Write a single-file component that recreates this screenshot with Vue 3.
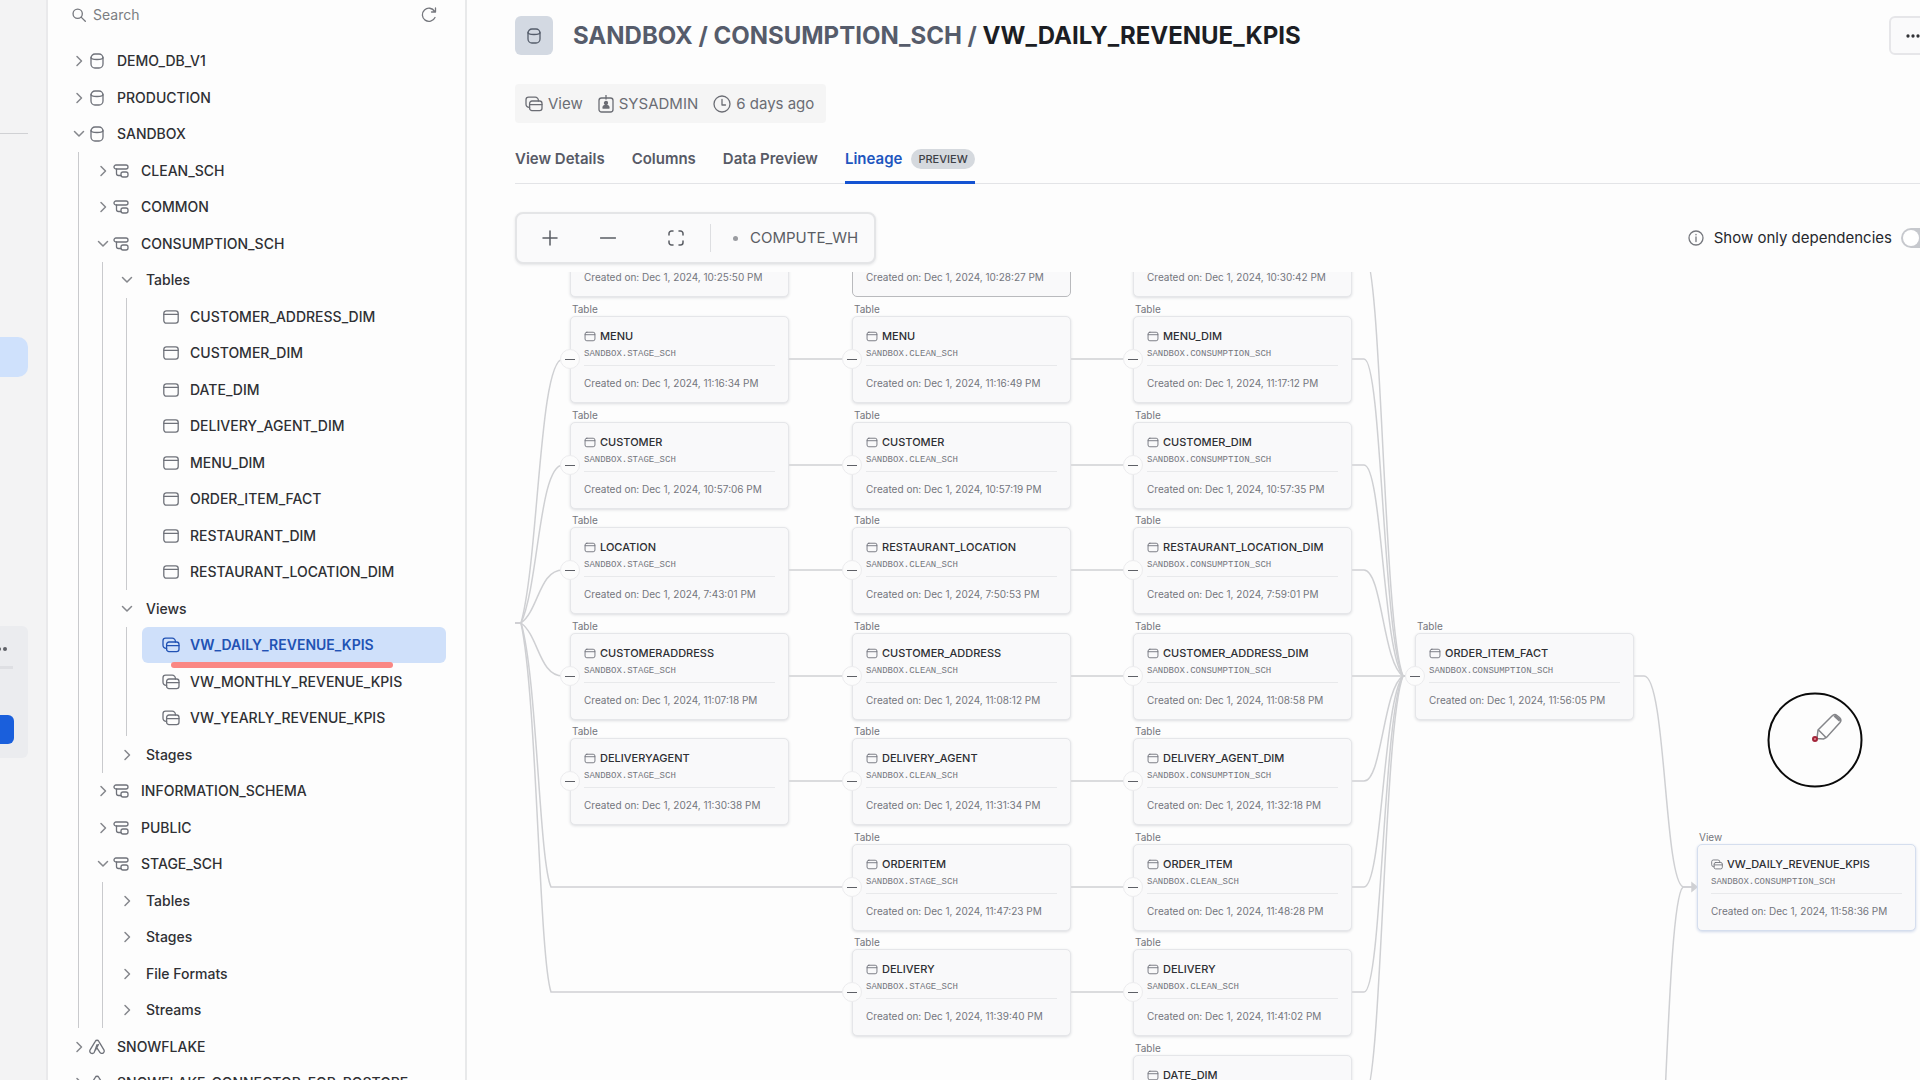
<script setup>
import { ref } from 'vue'

const search = ref('')
const onlyDependencies = ref(false)

const row = (depth, label, icon, open, extra = {}) => ({ depth, label, icon, open, ...extra })
const leaf = (label, icon, extra = {}) => ({ depth: 3, label, icon, leaf: true, ...extra })

const tree = [
  row(0, 'DEMO_DB_V1', 'db', false),
  row(0, 'PRODUCTION', 'db', false),
  row(0, 'SANDBOX', 'db', true),
  row(1, 'CLEAN_SCH', 'schema', false),
  row(1, 'COMMON', 'schema', false),
  row(1, 'CONSUMPTION_SCH', 'schema', true),
  row(2, 'Tables', null, true),
  leaf('CUSTOMER_ADDRESS_DIM', 'table'),
  leaf('CUSTOMER_DIM', 'table'),
  leaf('DATE_DIM', 'table'),
  leaf('DELIVERY_AGENT_DIM', 'table'),
  leaf('MENU_DIM', 'table'),
  leaf('ORDER_ITEM_FACT', 'table'),
  leaf('RESTAURANT_DIM', 'table'),
  leaf('RESTAURANT_LOCATION_DIM', 'table'),
  row(2, 'Views', null, true),
  leaf('VW_DAILY_REVENUE_KPIS', 'view', { selected: true }),
  leaf('VW_MONTHLY_REVENUE_KPIS', 'view'),
  leaf('VW_YEARLY_REVENUE_KPIS', 'view'),
  row(2, 'Stages', null, false),
  row(1, 'INFORMATION_SCHEMA', 'schema', false),
  row(1, 'PUBLIC', 'schema', false),
  row(1, 'STAGE_SCH', 'schema', true),
  row(2, 'Tables', null, false),
  row(2, 'Stages', null, false),
  row(2, 'File Formats', null, false),
  row(2, 'Streams', null, false),
  row(0, 'SNOWFLAKE', 'app', false),
  row(0, 'SNOWFLAKE_CONNECTOR_FOR_POSTGRE', 'app', false),
]

// Lineage graph: columns and rows of the layout grid
const CARD_W = 219
const colX = [55, 337, 618, 900, 1182]
const rowY = (r) => Math.round(86.9 + 105.6 * r)

const node = (col, r, name, schema, time, extra = {}) => ({
  col, r, name,
  schema: schema && 'SANDBOX.' + schema,
  created: time && 'Created on: Dec 1, 2024, ' + time,
  kind: 'Table', icon: 'table', handle: true,
  x: colX[col], y: rowY(r), ...extra,
})
// Cards scrolled past the top edge keep only their last line
const tail = (col, time, extra = {}) => node(col, -1, '', '', time, { kind: '', handle: false, ...extra })

const nodes = [
  tail(0, '10:25:50 PM'),
  node(0, 0, 'MENU', 'STAGE_SCH', '11:16:34 PM'),
  node(0, 1, 'CUSTOMER', 'STAGE_SCH', '10:57:06 PM'),
  node(0, 2, 'LOCATION', 'STAGE_SCH', '7:43:01 PM'),
  node(0, 3, 'CUSTOMERADDRESS', 'STAGE_SCH', '11:07:18 PM'),
  node(0, 4, 'DELIVERYAGENT', 'STAGE_SCH', '11:30:38 PM'),
  tail(1, '10:28:27 PM', { hover: true }),
  node(1, 0, 'MENU', 'CLEAN_SCH', '11:16:49 PM'),
  node(1, 1, 'CUSTOMER', 'CLEAN_SCH', '10:57:19 PM'),
  node(1, 2, 'RESTAURANT_LOCATION', 'CLEAN_SCH', '7:50:53 PM'),
  node(1, 3, 'CUSTOMER_ADDRESS', 'CLEAN_SCH', '11:08:12 PM'),
  node(1, 4, 'DELIVERY_AGENT', 'CLEAN_SCH', '11:31:34 PM'),
  node(1, 5, 'ORDERITEM', 'STAGE_SCH', '11:47:23 PM'),
  node(1, 6, 'DELIVERY', 'STAGE_SCH', '11:39:40 PM'),
  tail(2, '10:30:42 PM'),
  node(2, 0, 'MENU_DIM', 'CONSUMPTION_SCH', '11:17:12 PM'),
  node(2, 1, 'CUSTOMER_DIM', 'CONSUMPTION_SCH', '10:57:35 PM'),
  node(2, 2, 'RESTAURANT_LOCATION_DIM', 'CONSUMPTION_SCH', '7:59:01 PM'),
  node(2, 3, 'CUSTOMER_ADDRESS_DIM', 'CONSUMPTION_SCH', '11:08:58 PM'),
  node(2, 4, 'DELIVERY_AGENT_DIM', 'CONSUMPTION_SCH', '11:32:18 PM'),
  node(2, 5, 'ORDER_ITEM', 'CLEAN_SCH', '11:48:28 PM'),
  node(2, 6, 'DELIVERY', 'CLEAN_SCH', '11:41:02 PM'),
  node(2, 7, 'DATE_DIM', '', '', { handle: false }),
  node(3, 3, 'ORDER_ITEM_FACT', 'CONSUMPTION_SCH', '11:56:05 PM'),
  node(4, 5, 'VW_DAILY_REVENUE_KPIS', 'CONSUMPTION_SCH', '11:58:36 PM', {
    kind: 'View', icon: 'view', handle: false, current: true,
  }),
]

const edges = []
const fanY = 351
for (const r of [0, 1, 2, 3]) {
  const y = rowY(r)
  const d = y - fanY
  edges.push(`M0 ${fanY}H6C${24} ${fanY + d * 0.25} 24 ${y} 48 ${y}`)
}
for (const r of [5, 6]) {
  const y = rowY(r)
  const d = y - fanY
  edges.push(`M0 ${fanY}H6C22 ${fanY + d * 0.2} 24 ${y - d * 0.1} 36 ${y}H${colX[1] - 9}`)
}
for (let r = 0; r <= 6; r++) {
  if (r <= 4) edges.push(`M${colX[0] + CARD_W} ${rowY(r)}H${colX[1] - 9}`)
  edges.push(`M${colX[1] + CARD_W} ${rowY(r)}H${colX[2] - 9}`)
}
const hubX = colX[3] - 12
for (let r = -1; r <= 7; r++) {
  const y = rowY(r)
  const d = rowY(3) - y
  const x = colX[2] + CARD_W
  edges.push(`M${x} ${y}H${x + 12}C${x + 30} ${y} ${x + 31} ${y + d * 0.88} ${hubX} ${rowY(3)}H${colX[3] - 8}`)
}
for (const r of [3, 9]) {
  const y = rowY(r)
  const d = rowY(5) - y
  const x = colX[3] + CARD_W
  edges.push(`M${x} ${y}H${x + 10}C${x + 32} ${y} ${x + 30} ${y + d * 0.96} ${colX[4] - 14} ${rowY(5)}H${colX[4] - 4}`)
}
const arrow = `M${colX[4] - 5} ${rowY(5) - 4}L${colX[4]} ${rowY(5)}L${colX[4] - 5} ${rowY(5) + 4}Z`
</script>

<template>
  <svg class="sprite" aria-hidden="true">
    <symbol id="i-db" viewBox="0 0 16 16"><rect x="2" y="1" width="12" height="14" rx="4" /><path d="M2 4.500c0 2 2.800 2 6 2s6 0 6-2" /></symbol>
    <symbol id="i-schema" viewBox="0 0 16 16"><rect x="1" y="2" width="14" height="4" rx="2" /><path d="M3.500 6v4.500a2 2 0 0 0 2 2H8" /><rect x="8" y="9" width="7" height="5" rx="2" /></symbol>
    <symbol id="i-table" viewBox="0 0 16 16"><rect x="0.800" y="1.800" width="14.400" height="12.400" rx="2.600" /><path d="M1 5.400h14" /></symbol>
    <symbol id="i-view" viewBox="0 0 18 16"><rect x="4.600" y="5" width="12.400" height="9.600" rx="2.400" /><path d="M5 8.600h12M4.600 11.400H4.200A3.200 3.200 0 0 1 1 8.200V3.800A2.600 2.600 0 0 1 3.600 1.200h6.600a3.200 3.200 0 0 1 3.200 3.200V5" /></symbol>
    <symbol id="i-app" viewBox="0 0 16 16"><path d="M8 5.600 5.300 13.300a2.400 2.400 0 0 1-4.200-2.400L6.300 2.300a2 2 0 0 1 3.500 0l5.100 8.600a2.300 2.300 0 0 1-4 2.400L7.600 8.300M9.500 5.500 6.600 11" /></symbol>
    <symbol id="i-right" viewBox="0 0 14 14"><path d="M5 2.500 9.500 7 5 11.500" /></symbol>
    <symbol id="i-down" viewBox="0 0 14 14"><path d="M2.500 4.500 7 9l4.500-4.500" /></symbol>
    <symbol id="i-search" viewBox="0 0 16 16"><circle cx="6.500" cy="6.500" r="5.300" /><path d="m10.400 10.400 4.800 4.800" /></symbol>
    <symbol id="i-refresh" viewBox="0 0 16 16"><path d="M14 10.500A6.600 6.600 0 1 1 13.600 4.300M14.500 1v4h-4" /></symbol>
    <symbol id="i-role" viewBox="0 0 16 18"><rect x="1" y="3" width="14" height="14" rx="2.500" /><path d="M8 .5V4" /><circle cx="8" cy="8" r="1.500" class="solid" /><path d="M5 13c0-3.500 6-3.500 6 0Z" class="solid" /></symbol>
    <symbol id="i-clock" viewBox="0 0 18 18"><circle cx="9" cy="9" r="8" /><path d="M9 4.500V10h3.500" /></symbol>
    <symbol id="i-plus" viewBox="0 0 16 16"><path d="M8 1v14M1 8h14" /></symbol>
    <symbol id="i-minus" viewBox="0 0 16 16"><path d="M.5 8h15" /></symbol>
    <symbol id="i-fit" viewBox="0 0 16 16"><path d="M1 5V3.500A2.500 2.500 0 0 1 3.500 1H5M11 1h1.500A2.500 2.500 0 0 1 15 3.500V5M15 11v1.500a2.500 2.500 0 0 1-2.500 2.500H11M5 15H3.500A2.500 2.500 0 0 1 1 12.500V11" /></symbol>
    <symbol id="i-info" viewBox="0 0 16 16"><circle cx="8" cy="8" r="7" /><path d="M8 7v4.500M8 4.300v.5" /></symbol>
    <symbol id="i-more" viewBox="0 0 16 16"><circle cx="2" cy="8" r="1" class="solid" /><circle cx="7" cy="8" r="1" class="solid" /><circle cx="12" cy="8" r="1" class="solid" /></symbol>
  </svg>

  <div class="shell">
    <aside class="rail">
      <div class="rail-line"></div>
      <div class="rail-active"></div>
      <div class="rail-card">
        <svg class="rail-dots" viewBox="0 0 16 20"><circle cx="-1" cy="10" r="2" /><circle cx="5" cy="10" r="2" /></svg>
        <div class="rail-progress"></div>
        <button class="rail-button" aria-label="Upgrade"></button>
      </div>
    </aside>

    <nav class="explorer">
      <div class="search">
        <svg class="icon search-icon"><use href="#i-search" /></svg>
        <input v-model="search" type="text" placeholder="Search" aria-label="Search" />
        <button class="refresh" aria-label="Refresh"><svg class="icon"><use href="#i-refresh" /></svg></button>
      </div>
      <ul class="tree">
        <li v-for="(item, i) in tree" :key="i" class="tree-row">
          <span v-for="n in item.depth" :key="n" class="guide"></span>
          <a v-if="item.leaf" href="#" class="leaf" :class="{ selected: item.selected }">
            <svg class="icon leaf-icon"><use :href="'#i-' + item.icon" /></svg>
            <span>{{ item.label }}</span>
            <i v-if="item.selected" class="marker"></i>
          </a>
          <button v-else class="branch" :class="{ group: !item.icon }" :aria-expanded="item.open">
            <svg class="icon chevron"><use :href="item.open ? '#i-down' : '#i-right'" /></svg>
            <svg v-if="item.icon" class="icon branch-icon"><use :href="'#i-' + item.icon" /></svg>
            <span>{{ item.label }}</span>
          </button>
        </li>
      </ul>
    </nav>

    <main class="main">
      <header class="header">
        <span class="badge"><svg class="icon"><use href="#i-db" /></svg></span>
        <h1><span class="path">SANDBOX / CONSUMPTION_SCH /</span> VW_DAILY_REVENUE_KPIS</h1>
        <button class="more" aria-label="More"><svg class="icon"><use href="#i-more" /></svg></button>
      </header>

      <div class="meta">
        <span><svg class="icon wide"><use href="#i-view" /></svg>View</span>
        <span><svg class="icon"><use href="#i-role" /></svg>SYSADMIN</span>
        <span><svg class="icon wide"><use href="#i-clock" /></svg>6 days ago</span>
      </div>

      <div class="tabs" role="tablist">
        <button role="tab">View Details</button>
        <button role="tab">Columns</button>
        <button role="tab">Data Preview</button>
        <button role="tab" class="active" aria-selected="true">Lineage <span class="pill">PREVIEW</span></button>
      </div>

      <div class="controls">
        <div class="toolbar">
          <button aria-label="Zoom in"><svg class="icon"><use href="#i-plus" /></svg></button>
          <button aria-label="Zoom out"><svg class="icon"><use href="#i-minus" /></svg></button>
          <button class="fit" aria-label="Fit to screen"><svg class="icon"><use href="#i-fit" /></svg></button>
          <button class="warehouse"><i class="dot"></i>COMPUTE_WH</button>
        </div>
        <label class="dependencies" for="deps">
          <svg class="icon"><use href="#i-info" /></svg>
          Show only dependencies
          <input id="deps" v-model="onlyDependencies" type="checkbox" />
        </label>
      </div>

      <section class="canvas">
        <svg class="edges">
          <path v-for="(d, i) in edges" :key="i" :d="d" />
          <path :d="arrow" class="arrow" />
        </svg>
        <article
          v-for="n in nodes"
          :key="n.col + '/' + n.r"
          class="node"
          :style="{ left: n.x + 'px', top: n.y - 58 + 'px' }"
        >
          <span class="kind">{{ n.kind }}</span>
          <div class="card" :class="{ hover: n.hover, current: n.current }">
            <h2 v-if="n.name"><svg class="icon"><use :href="'#i-' + n.icon" /></svg>{{ n.name }}</h2>
            <p v-if="n.schema" class="schema">{{ n.schema }}</p>
            <p v-if="n.created" class="created">{{ n.created }}</p>
            <button v-if="n.handle" class="handle" aria-label="Collapse"></button>
          </div>
        </article>
        <svg class="pen" viewBox="0 0 96 96">
          <circle cx="48" cy="48" r="46.500" class="ring" />
          <path d="M51 38 65 24q2.500-2.500 5-.5l2.500 2q2.500 2.500.5 5L59.500 45.500l-3 1.500-6.500-.5ZM51.500 38l7.500 7.500" class="body" />
          <path d="M67.500 23.500l5.500 5" class="cap" />
          <circle cx="48" cy="47" r="2" class="tip" />
        </svg>
      </section>
    </main>
  </div>
</template>

<style>
body {
  margin: 0;
  background: #fdfdfd;
}
</style>

<style scoped>
.shell {
  display: flex;
  height: 100vh;
  overflow: hidden;
  background: #fdfdfd;
  color: #2f3034;
  font: 15px/20px Inter, "Liberation Sans", sans-serif;
}
button,
input {
  margin: 0;
  padding: 0;
  border: 0;
  background: none;
  color: inherit;
  font: inherit;
}
.sprite {
  position: absolute;
  width: 0;
  height: 0;
}
.icon {
  display: block;
  flex: none;
  width: 16px;
  height: 16px;
  fill: none;
  stroke: currentColor;
  stroke-width: 1.3;
  stroke-linecap: round;
  stroke-linejoin: round;
}
.solid {
  fill: currentColor;
}

/* Collapsed app rail */
.rail {
  box-sizing: border-box;
  flex: none;
  width: 48px;
  padding-top: 133px;
  background: #f3f3f4;
  border-right: 2px solid #e9e9eb;
}
.rail-line {
  width: 28px;
  height: 1px;
  background: #d0d1d4;
}
.rail-active {
  width: 28px;
  height: 40px;
  margin-top: 203px;
  border-radius: 0 10px 10px 0;
  background: #cfe1fc;
}
.rail-card {
  box-sizing: border-box;
  width: 28px;
  height: 132px;
  margin-top: 249px;
  padding-top: 13px;
  border-radius: 0 6px 6px 0;
  background: #ebecef;
}
.rail-dots {
  display: block;
  width: 16px;
  height: 20px;
  fill: #5f6167;
}
.rail-progress {
  width: 13px;
  height: 3px;
  margin-top: 7px;
  background: #dedfe3;
}
.rail-button {
  display: block;
  width: 14px;
  height: 29px;
  margin-top: 46px;
  border-radius: 0 6px 6px 0;
  background: #1a5fdc;
}

/* Object explorer */
.explorer {
  box-sizing: border-box;
  flex: none;
  width: 419px;
  padding: 0 19px 0 24px;
  border-right: 2px solid #e8e9ea;
  overflow: hidden;
}
.search {
  display: flex;
  align-items: center;
  height: 29px;
  margin-bottom: 14px;
  color: #75777d;
  font-size: 14px;
}
.search-icon {
  width: 14px;
  height: 14px;
  stroke-width: 1.5;
}
.search input {
  flex: 1;
  min-width: 0;
  padding-left: 7px;
  outline: none;
}
.search input::placeholder {
  color: #7b7d82;
  opacity: 1;
}
.refresh {
  margin-right: 9px;
}
.tree {
  margin: 0;
  padding: 0;
  font-size: 14px;
  font-weight: 500;
  list-style: none;
}
.tree-row {
  display: flex;
  height: 36px;
  white-space: nowrap;
}
.tree-row:nth-child(even) {
  height: 37px;
}
.guide {
  flex: none;
  box-sizing: border-box;
  width: 18px;
  margin-left: 6px;
  border-left: 1px solid #c9cacd;
}
.branch {
  display: flex;
  align-items: center;
}
.chevron {
  width: 14px;
  height: 14px;
  margin-right: 3px;
  color: #85878c;
  stroke-width: 1.5;
}
.branch-icon {
  margin-right: 12px;
  color: #6f727a;
}
.group .chevron {
  margin-right: 12px;
}
.leaf {
  position: relative;
  display: flex;
  flex: 1;
  align-items: center;
  margin-left: -2px;
  padding-left: 20px;
  border-radius: 6px;
  color: inherit;
  text-decoration: none;
}
.leaf-icon {
  width: 18px;
  margin-right: 10px;
  color: #6f727a;
}
.leaf.selected {
  background: #cfe0fa;
  color: #2152b4;
  font-weight: 600;
}
.selected .leaf-icon {
  color: #2152b4;
}
.marker {
  position: absolute;
  top: 35px;
  left: 29px;
  width: 222px;
  height: 6px;
  border-radius: 3px;
  background: #fa8784;
}

/* Object page */
.main {
  display: flex;
  flex: 1;
  flex-direction: column;
  min-width: 0;
  margin-right: -18px;
  padding: 16px 0 0 48px;
}
.header {
  display: flex;
  align-items: center;
  height: 39px;
}
.badge {
  display: grid;
  flex: none;
  place-items: center;
  width: 38px;
  height: 39px;
  border-radius: 6px;
  background: #d3d9e2;
  color: #555d6b;
}
h1 {
  flex: 1;
  margin: 0 0 0 20px;
  color: #1c1e24;
  font-size: 24px;
  font-weight: 700;
  line-height: 32px;
  white-space: nowrap;
}
.path {
  color: #565c6b;
}
.more {
  display: flex;
  align-items: center;
  box-sizing: border-box;
  width: 49px;
  height: 39px;
  padding-left: 15px;
  border: 2px solid #e6e6e9;
  border-radius: 6px;
  background: #fafafb;
}
.meta {
  display: flex;
  align-items: center;
  align-self: flex-start;
  box-sizing: border-box;
  gap: 15px;
  height: 39px;
  margin-top: 29px;
  padding: 0 12px 0 10px;
  border-radius: 4px;
  background: #f5f5f5;
  color: #6b6d74;
}
.meta span {
  display: flex;
  align-items: center;
  gap: 5px;
}
.meta .icon {
  height: 18px;
}
.meta .wide {
  width: 18px;
}
.tabs {
  display: flex;
  gap: 27px;
  height: 60px;
  border-bottom: 1px solid #e3e4e7;
}
.tabs button {
  display: flex;
  align-items: center;
  gap: 9px;
  box-sizing: border-box;
  height: 61px;
  padding-top: 14px;
  border-bottom: 3px solid transparent;
  color: #575a66;
  font-weight: 600;
}
.tabs .active {
  border-bottom-color: #1453d2;
  color: #1e56bf;
}
.pill {
  padding: 0 7px;
  border-radius: 10px;
  background: #d5d9de;
  color: #3d4046;
  font-size: 11px;
  font-weight: 500;
}
.controls {
  display: flex;
  align-items: center;
  justify-content: space-between;
  height: 52px;
  margin-top: 28px;
  margin-bottom: 8px;
}
.toolbar {
  display: flex;
  align-items: center;
  box-sizing: border-box;
  height: 52px;
  padding: 0 16px 0 25px;
  border: 2px solid #e4e5e7;
  border-radius: 8px;
  background: #fafafb;
  box-shadow: 0 1px 3px #e4e5e7;
  color: #5a5d64;
}
.toolbar button {
  display: flex;
  align-items: center;
}
.toolbar button .icon {
  margin-right: 42px;
  stroke-width: 1.5;
}
.toolbar .fit {
  padding-left: 10px;
}
.toolbar .fit .icon {
  margin-right: 26px;
}
.warehouse {
  height: 28px;
  border-left: 1px solid #dddee1;
  padding-left: 22px;
}
.dot {
  width: 5px;
  height: 5px;
  margin-right: 12px;
  border-radius: 3px;
  background: #9a9ca1;
}
.dependencies {
  display: flex;
  align-items: center;
  color: #26282d;
}
.dependencies .icon {
  margin-right: 10px;
  color: #75777d;
}
.dependencies input {
  display: flex;
  align-items: center;
  box-sizing: border-box;
  width: 37px;
  height: 20px;
  margin-left: 9px;
  padding: 2px;
  border-radius: 10px;
  background: #c6c8cd;
  appearance: none;
}
.dependencies input::before {
  width: 16px;
  height: 16px;
  border-radius: 8px;
  background: #fff;
  content: "";
}

/* Lineage graph */
.canvas {
  position: relative;
  flex: 1;
  min-height: 0;
  overflow: hidden;
}
.edges {
  position: absolute;
  width: 100%;
  height: 100%;
  fill: none;
  stroke: #cfd0d3;
  stroke-width: 1.5;
}
.arrow {
  fill: #cfd0d3;
}
.node {
  position: absolute;
  width: 219px;
}
.kind {
  display: block;
  height: 15px;
  padding-left: 2px;
  color: #74767c;
  font-size: 10px;
  line-height: 16px;
}
.card {
  position: relative;
  display: flex;
  flex-direction: column;
  box-sizing: border-box;
  height: 87px;
  padding: 11px 13px 13px;
  border: 1px solid #e5e6e9;
  border-radius: 5px;
  background: #f9f9fa;
  box-shadow: 0 1px 3px #dcdde0;
}
.card.hover {
  border-color: #b9babd;
  box-shadow: none;
}
.card.current {
  border-color: #d5deee;
  box-shadow: 0 1px 3px #cfd8ea;
}
h2 {
  display: flex;
  align-items: center;
  gap: 4px;
  margin: 0;
  color: #2e2f33;
  font-size: 11px;
  font-weight: 500;
  line-height: 16px;
}
h2 .icon {
  width: 12px;
  height: 11px;
  color: #6f727a;
}
.card p {
  margin: 0;
  color: #74767d;
  line-height: 12px;
  white-space: nowrap;
}
.card .schema {
  padding: 4px 0 5px;
  border-bottom: 1px solid #e8e9eb;
  font-family: "Liberation Mono", monospace;
  font-size: 9px;
}
.card .created {
  margin-top: auto;
  font-size: 10px;
}
.handle {
  position: absolute;
  top: 32px;
  left: -11px;
  display: grid;
  place-items: center;
  box-sizing: border-box;
  width: 20px;
  height: 20px;
  border: 1px solid #ececee;
  border-radius: 10px;
  background: #fcfcfc;
}
.handle::before {
  width: 10px;
  height: 1px;
  background: #5e6066;
  content: "";
}
.pen {
  position: absolute;
  top: 420px;
  left: 1252px;
  width: 96px;
  height: 96px;
  fill: none;
}
.ring {
  stroke: #0a0a0a;
  stroke-width: 2;
}
.body {
  stroke: #85868a;
  stroke-width: 1.5;
}
.cap {
  stroke: #85868a;
  stroke-width: 3;
}
.tip {
  fill: #e08a96;
  stroke: #a3253a;
  stroke-width: 2;
}
</style>
